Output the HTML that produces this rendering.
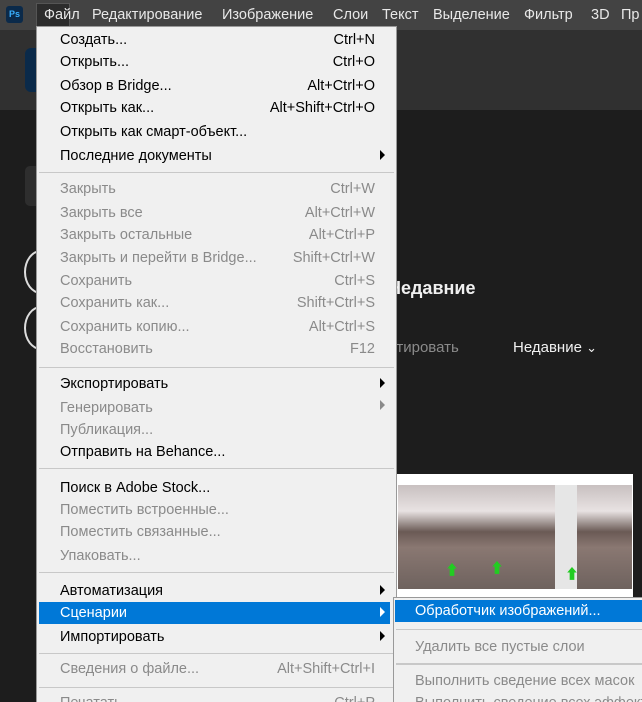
<!DOCTYPE html>
<html style="overflow:hidden;height:702px"><head><meta charset="utf-8"><style>
body{margin:0;width:642px;height:702px;overflow:hidden;background:#1d1d1d;font-family:"Liberation Sans","Noto Sans CJK SC",sans-serif;position:relative}
.a{position:absolute;white-space:nowrap}
#bar{position:absolute;left:0;top:0;width:642px;height:30px;background:#434343}
#bar span{position:absolute;top:7px;color:#e8e8e8;font-size:14.5px}
#menu{position:absolute;left:36px;top:26px;width:359px;height:676px;background:#f0f0f0;border:1px solid #999;border-bottom:none;overflow:hidden}
.i{position:absolute;left:23px;font-size:14.5px;color:#000;line-height:18px}
.d{color:#8a8a8a}
.k{position:absolute;right:21px;font-size:14.5px;line-height:18px}
.s{position:absolute;left:2px;right:2px;height:1px;background:#c8c8c8}
.ar{position:absolute;left:343px;width:0;height:0;border-top:5px solid transparent;border-bottom:5px solid transparent;border-left:5px solid #000}
</style></head><body>
<div class="a" style="left:0;top:30px;width:642px;height:80px;background:#303030"></div>
<div class="a" style="left:25px;top:48px;width:20px;height:44px;background:#0a2a4a;border-radius:6px"></div>
<div class="a" style="left:25px;top:166px;width:20px;height:40px;background:#2e2e2e;border-radius:5px"></div>
<div class="a" style="left:24px;top:250px;width:30px;height:40px;border:2px solid #ddd;border-radius:50%"></div>
<div class="a" style="left:24px;top:306px;width:30px;height:40px;border:2px solid #ddd;border-radius:50%"></div>
<div class="a" style="left:388px;top:278px;color:#f0f0f0;font-size:18px;font-weight:bold">Недавние</div>
<div class="a" style="left:380px;top:339px;color:#8a8a8a;font-size:15px">ортировать</div>
<div class="a" style="left:513px;top:339px;color:#f0f0f0;font-size:15px">Недавние <span style="font-size:13px">&#8964;</span></div>
<div class="a" style="left:397px;top:474px;width:236px;height:152px;background:#fff"></div>
<div class="a" style="left:398px;top:485px;width:234px;height:104px;background:linear-gradient(#c8c0c0 0%,#e8e2e2 25%,#6a5a55 45%,#8a7872 60%,#6e625e 100%)"></div>
<div class="a" style="left:555px;top:485px;width:22px;height:104px;background:#e6e6e6"></div>
<div class="a" style="left:445px;top:560px;color:#2c2;font-size:14px">&#11014;</div>
<div class="a" style="left:490px;top:558px;color:#2c2;font-size:14px">&#11014;</div>
<div class="a" style="left:565px;top:564px;color:#2c2;font-size:14px">&#11014;</div>
<div id="bar">
<div class="a" style="left:6px;top:6px;width:17px;height:17px;background:#0b2a4a;border-radius:3px;color:#3ab0ff;font-size:9px;font-weight:bold;text-align:center;line-height:17px">Ps</div>
<div class="a" style="left:36px;top:3px;width:32px;height:22px;background:#2c2c2c;border:1px solid #555"></div>
<span style="left:44px">Файл</span><span style="left:92px">Редактирование</span><span style="left:222px">Изображение</span><span style="left:333px">Слои</span><span style="left:382px">Текст</span><span style="left:433px">Выделение</span><span style="left:524px">Фильтр</span><span style="left:591px">3D</span><span style="left:621px">Пр</span>
</div>
<div id="menu">
<div class="i" style="top:4px">Создать...</div><div class="k" style="top:4px">Ctrl+N</div>
<div class="i" style="top:26px">Открыть...</div><div class="k" style="top:26px">Ctrl+O</div>
<div class="i" style="top:50px">Обзор в Bridge...</div><div class="k" style="top:50px">Alt+Ctrl+O</div>
<div class="i" style="top:72px">Открыть как...</div><div class="k" style="top:72px">Alt+Shift+Ctrl+O</div>
<div class="i" style="top:96px">Открыть как смарт-объект...</div>
<div class="i" style="top:120px">Последние документы</div><div class="ar" style="top:123px"></div>
<div class="s" style="top:145px"></div>
<div class="i d" style="top:153px">Закрыть</div><div class="k d" style="top:153px">Ctrl+W</div>
<div class="i d" style="top:177px">Закрыть все</div><div class="k d" style="top:177px">Alt+Ctrl+W</div>
<div class="i d" style="top:199px">Закрыть остальные</div><div class="k d" style="top:199px">Alt+Ctrl+P</div>
<div class="i d" style="top:222px">Закрыть и перейти в Bridge...</div><div class="k d" style="top:222px">Shift+Ctrl+W</div>
<div class="i d" style="top:245px">Сохранить</div><div class="k d" style="top:245px">Ctrl+S</div>
<div class="i d" style="top:267px">Сохранить как...</div><div class="k d" style="top:267px">Shift+Ctrl+S</div>
<div class="i d" style="top:291px">Сохранить копию...</div><div class="k d" style="top:291px">Alt+Ctrl+S</div>
<div class="i d" style="top:313px">Восстановить</div><div class="k d" style="top:313px">F12</div>
<div class="s" style="top:340px"></div>
<div class="i" style="top:348px">Экспортировать</div><div class="ar" style="top:351px"></div>
<div class="i d" style="top:372px">Генерировать</div><div class="ar" style="top:373px;border-left-color:#8a8a8a"></div>
<div class="i d" style="top:394px">Публикация...</div>
<div class="i" style="top:416px">Отправить на Behance...</div>
<div class="s" style="top:441px"></div>
<div class="i" style="top:452px">Поиск в Adobe Stock...</div>
<div class="i d" style="top:474px">Поместить встроенные...</div>
<div class="i d" style="top:496px">Поместить связанные...</div>
<div class="i d" style="top:520px">Упаковать...</div>
<div class="s" style="top:545px"></div>
<div class="i" style="top:555px">Автоматизация</div><div class="ar" style="top:558px"></div>
<div class="a" style="left:2px;top:575px;width:351px;height:22px;background:#0078d7"></div>
<div class="i" style="top:577px;color:#fff">Сценарии</div><div class="ar" style="top:580px;border-left-color:#fff"></div>
<div class="i" style="top:601px">Импортировать</div><div class="ar" style="top:604px"></div>
<div class="s" style="top:626px"></div>
<div class="i d" style="top:633px">Сведения о файле...</div><div class="k d" style="top:633px">Alt+Shift+Ctrl+I</div>
<div class="s" style="top:660px"></div>
<div class="i d" style="top:667px">Печатать</div><div class="k d" style="top:667px">Ctrl+P</div>
</div>
<div class="a" style="left:393px;top:597px;width:260px;height:110px;background:#f0f0f0;border:1px solid #999;overflow:hidden">
<div class="a" style="left:1px;top:2px;width:260px;height:22px;background:#0078d7"></div>
<div class="a" style="left:21px;top:4px;color:#fff;font-size:14.5px;line-height:18px">Обработчик изображений...</div>
<div class="a" style="left:2px;top:31px;width:260px;height:1px;background:#c8c8c8"></div>
<div class="a" style="left:21px;top:40px;color:#8a8a8a;font-size:14.5px;line-height:18px">Удалить все пустые слои</div>
<div class="a" style="left:2px;top:65px;width:260px;height:2px;background:#c8c8c8"></div>
<div class="a" style="left:21px;top:74px;color:#8a8a8a;font-size:14.5px;line-height:18px">Выполнить сведение всех масок</div>
<div class="a" style="left:21px;top:96px;color:#8a8a8a;font-size:14.5px;line-height:18px">Выполнить сведение всех эффектов</div>
</div>
</body></html>
